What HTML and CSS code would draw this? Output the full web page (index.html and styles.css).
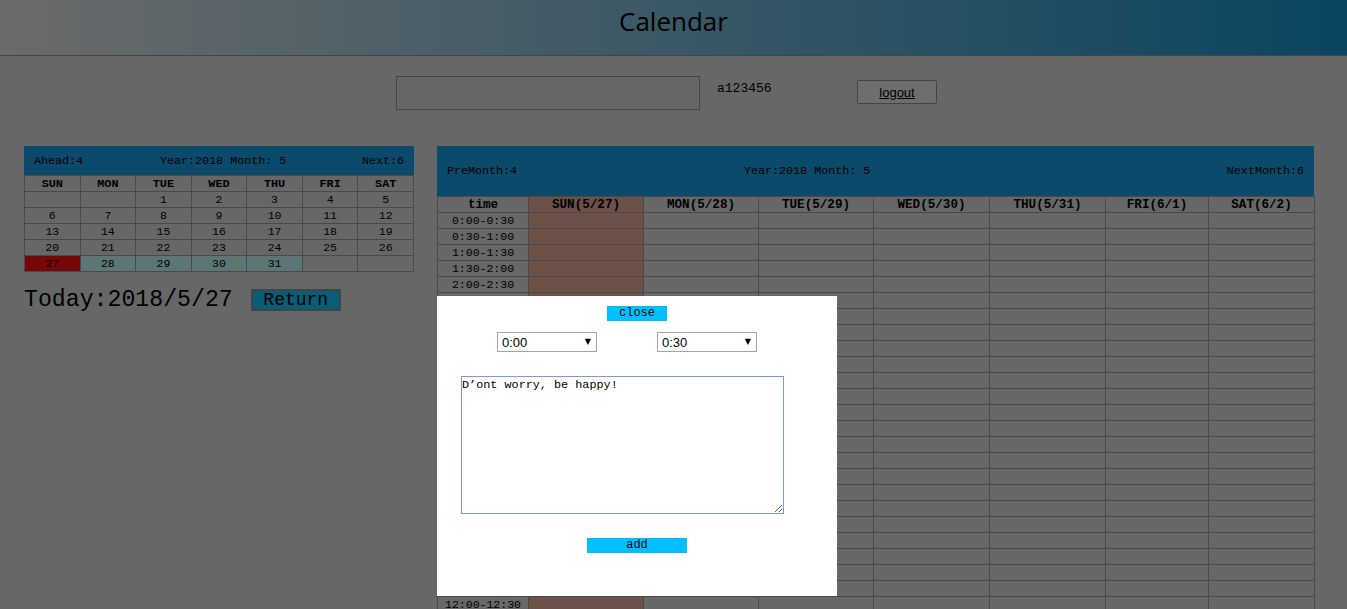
FILE: index.html
```html
<!DOCTYPE html>
<html>
<head>
<meta charset="utf-8">
<title>Calendar</title>
<link rel="stylesheet" href="styles.css">
</head>
<body>
<header class="topbar"><h1 class="title">Calendar</h1></header>

<div class="userbar">
  <input class="search" type="text">
  <span class="username">a123456</span>
  <button class="logout">logout</button>
</div>

<main class="content">
  <section class="mini">
    <div class="mini-head">
      <span>Ahead:4</span><span>Year:2018 Month: 5</span><span>Next:6</span>
    </div>
    <table class="mini-table">
      <thead><tr><th>SUN</th><th>MON</th><th>TUE</th><th>WED</th><th>THU</th><th>FRI</th><th>SAT</th></tr></thead>
      <tbody>
        <tr><td></td><td></td><td>1</td><td>2</td><td>3</td><td>4</td><td>5</td></tr>
        <tr><td>6</td><td>7</td><td>8</td><td>9</td><td>10</td><td>11</td><td>12</td></tr>
        <tr><td>13</td><td>14</td><td>15</td><td>16</td><td>17</td><td>18</td><td>19</td></tr>
        <tr><td>20</td><td>21</td><td>22</td><td>23</td><td>24</td><td>25</td><td>26</td></tr>
        <tr><td class="today">27</td><td class="week">28</td><td class="week">29</td><td class="week">30</td><td class="week">31</td><td></td><td></td></tr>
      </tbody>
    </table>
    <div class="today-line">
      <span class="today-text">Today:2018/5/27</span>
      <button class="return">Return</button>
    </div>
  </section>

  <section class="weekly">
    <div class="week-head">
      <span>PreMonth:4</span><span>Year:2018 Month: 5</span><span>NextMonth:6</span>
    </div>
    <table class="week-table">
      <colgroup>
        <col class="w-time"><col class="w-115"><col class="w-115"><col class="w-115"><col class="w-116"><col class="w-116"><col class="w-103"><col class="w-106">
      </colgroup>
      <thead>
        <tr><th>time</th><th class="sun">SUN(5/27)</th><th>MON(5/28)</th><th>TUE(5/29)</th><th>WED(5/30)</th><th>THU(5/31)</th><th>FRI(6/1)</th><th>SAT(6/2)</th></tr>
      </thead>
      <tbody>
        <tr><td>0:00-0:30</td><td class="sun"></td><td></td><td></td><td></td><td></td><td></td><td></td></tr>
        <tr><td>0:30-1:00</td><td class="sun"></td><td></td><td></td><td></td><td></td><td></td><td></td></tr>
        <tr><td>1:00-1:30</td><td class="sun"></td><td></td><td></td><td></td><td></td><td></td><td></td></tr>
        <tr><td>1:30-2:00</td><td class="sun"></td><td></td><td></td><td></td><td></td><td></td><td></td></tr>
        <tr><td>2:00-2:30</td><td class="sun"></td><td></td><td></td><td></td><td></td><td></td><td></td></tr>
        <tr><td>2:30-3:00</td><td class="sun"></td><td></td><td></td><td></td><td></td><td></td><td></td></tr>
        <tr><td>3:00-3:30</td><td class="sun"></td><td></td><td></td><td></td><td></td><td></td><td></td></tr>
        <tr><td>3:30-4:00</td><td class="sun"></td><td></td><td></td><td></td><td></td><td></td><td></td></tr>
        <tr><td>4:00-4:30</td><td class="sun"></td><td></td><td></td><td></td><td></td><td></td><td></td></tr>
        <tr><td>4:30-5:00</td><td class="sun"></td><td></td><td></td><td></td><td></td><td></td><td></td></tr>
        <tr><td>5:00-5:30</td><td class="sun"></td><td></td><td></td><td></td><td></td><td></td><td></td></tr>
        <tr><td>5:30-6:00</td><td class="sun"></td><td></td><td></td><td></td><td></td><td></td><td></td></tr>
        <tr><td>6:00-6:30</td><td class="sun"></td><td></td><td></td><td></td><td></td><td></td><td></td></tr>
        <tr><td>6:30-7:00</td><td class="sun"></td><td></td><td></td><td></td><td></td><td></td><td></td></tr>
        <tr><td>7:00-7:30</td><td class="sun"></td><td></td><td></td><td></td><td></td><td></td><td></td></tr>
        <tr><td>7:30-8:00</td><td class="sun"></td><td></td><td></td><td></td><td></td><td></td><td></td></tr>
        <tr><td>8:00-8:30</td><td class="sun"></td><td></td><td></td><td></td><td></td><td></td><td></td></tr>
        <tr><td>8:30-9:00</td><td class="sun"></td><td></td><td></td><td></td><td></td><td></td><td></td></tr>
        <tr><td>9:00-9:30</td><td class="sun"></td><td></td><td></td><td></td><td></td><td></td><td></td></tr>
        <tr><td>9:30-10:00</td><td class="sun"></td><td></td><td></td><td></td><td></td><td></td><td></td></tr>
        <tr><td>10:00-10:30</td><td class="sun"></td><td></td><td></td><td></td><td></td><td></td><td></td></tr>
        <tr><td>10:30-11:00</td><td class="sun"></td><td></td><td></td><td></td><td></td><td></td><td></td></tr>
        <tr><td>11:00-11:30</td><td class="sun"></td><td></td><td></td><td></td><td></td><td></td><td></td></tr>
        <tr><td>11:30-12:00</td><td class="sun"></td><td></td><td></td><td></td><td></td><td></td><td></td></tr>
        <tr><td>12:00-12:30</td><td class="sun"></td><td></td><td></td><td></td><td></td><td></td><td></td></tr>
        <tr><td>12:30-13:00</td><td class="sun"></td><td></td><td></td><td></td><td></td><td></td><td></td></tr>
        <tr><td>13:00-13:30</td><td class="sun"></td><td></td><td></td><td></td><td></td><td></td><td></td></tr>
        <tr><td>13:30-14:00</td><td class="sun"></td><td></td><td></td><td></td><td></td><td></td><td></td></tr>
        <tr><td>14:00-14:30</td><td class="sun"></td><td></td><td></td><td></td><td></td><td></td><td></td></tr>
        <tr><td>14:30-15:00</td><td class="sun"></td><td></td><td></td><td></td><td></td><td></td><td></td></tr>
        <tr><td>15:00-15:30</td><td class="sun"></td><td></td><td></td><td></td><td></td><td></td><td></td></tr>
        <tr><td>15:30-16:00</td><td class="sun"></td><td></td><td></td><td></td><td></td><td></td><td></td></tr>
        <tr><td>16:00-16:30</td><td class="sun"></td><td></td><td></td><td></td><td></td><td></td><td></td></tr>
        <tr><td>16:30-17:00</td><td class="sun"></td><td></td><td></td><td></td><td></td><td></td><td></td></tr>
        <tr><td>17:00-17:30</td><td class="sun"></td><td></td><td></td><td></td><td></td><td></td><td></td></tr>
        <tr><td>17:30-18:00</td><td class="sun"></td><td></td><td></td><td></td><td></td><td></td><td></td></tr>
        <tr><td>18:00-18:30</td><td class="sun"></td><td></td><td></td><td></td><td></td><td></td><td></td></tr>
        <tr><td>18:30-19:00</td><td class="sun"></td><td></td><td></td><td></td><td></td><td></td><td></td></tr>
        <tr><td>19:00-19:30</td><td class="sun"></td><td></td><td></td><td></td><td></td><td></td><td></td></tr>
        <tr><td>19:30-20:00</td><td class="sun"></td><td></td><td></td><td></td><td></td><td></td><td></td></tr>
        <tr><td>20:00-20:30</td><td class="sun"></td><td></td><td></td><td></td><td></td><td></td><td></td></tr>
        <tr><td>20:30-21:00</td><td class="sun"></td><td></td><td></td><td></td><td></td><td></td><td></td></tr>
        <tr><td>21:00-21:30</td><td class="sun"></td><td></td><td></td><td></td><td></td><td></td><td></td></tr>
        <tr><td>21:30-22:00</td><td class="sun"></td><td></td><td></td><td></td><td></td><td></td><td></td></tr>
        <tr><td>22:00-22:30</td><td class="sun"></td><td></td><td></td><td></td><td></td><td></td><td></td></tr>
        <tr><td>22:30-23:00</td><td class="sun"></td><td></td><td></td><td></td><td></td><td></td><td></td></tr>
        <tr><td>23:00-23:30</td><td class="sun"></td><td></td><td></td><td></td><td></td><td></td><td></td></tr>
        <tr><td>23:30-24:00</td><td class="sun"></td><td></td><td></td><td></td><td></td><td></td><td></td></tr>
      </tbody>
    </table>
  </section>
</main>

<div class="mask"></div>

<div class="dialog">
  <button class="close-btn">close</button>
  <div class="time-row">
    <div class="select-wrap">
      <select class="time-select"><option>0:00</option><option>0:30</option></select>
    </div>
    <div class="select-wrap">
      <select class="time-select"><option>0:30</option><option>1:00</option></select>
    </div>
  </div>
  <textarea class="note">D’ont worry, be happy!</textarea>
  <button class="add-btn">add</button>
</div>
</body>
</html>
```

FILE: styles.css
```css
* { box-sizing: border-box; }

html, body {
  margin: 0;
  padding: 0;
}

body {
  background: #cecece;
  font-family: "Liberation Mono", "DejaVu Sans Mono", monospace;
  color: #000;
}

.topbar {
  height: 56px;
  border-bottom: 1px solid #8a8a8a;
  background: linear-gradient(to right, #d6d6d6, #148ac2);
  text-align: center;
}

.title {
  margin: 0;
  font-family: "Open Sans", "Noto Sans", sans-serif;
  font-weight: 400;
  font-size: 26px;
  line-height: 42px;
  color: #000;
}

.userbar {
  display: flex;
  justify-content: center;
  align-items: flex-start;
  margin-top: 20px;
  padding-right: 14px;
}

.search {
  width: 304px;
  height: 34px;
  border: 1px solid #8a8a8a;
  background: #cecece;
  margin: 0;
}

.username {
  width: 140px;
  padding-left: 17px;
  box-sizing: content-box;
  font-size: 13px;
  line-height: 15px;
  margin-top: 5px;
}

.logout {
  margin: 4px 0 0 0;
  width: 80px;
  height: 24px;
  background: #dcdcdc;
  border: 1px solid #8a8a8a;
  border-radius: 2px;
  font-family: "Liberation Sans", Arial, sans-serif;
  font-size: 13px;
  text-decoration: underline;
  color: #000;
  padding: 0;
}

.content {
  display: flex;
  align-items: flex-start;
  gap: 23px;
  margin-top: 36px;
  padding-left: 24px;
}

.mini {
  width: 390px;
}

.mini-head {
  height: 29px;
  background: #1694d4;
  display: grid;
  grid-template-columns: 126px 1fr auto;
  align-items: center;
  padding: 0 10px;
  font-size: 11.7px;
}

.mini-table {
  width: 390px;
  border-collapse: collapse;
  table-layout: fixed;
}

.mini-table th,
.mini-table td {
  border: 1px solid #949494;
  height: 16px;
  padding: 0;
  text-align: center;
  line-height: 14px;
  font-size: 11.5px;
}

.mini-table th {
  font-weight: bold;
  font-size: 11.8px;
}

.mini-table .today {
  background: #ee1010;
}

.mini-table .week {
  background: #b8ecea;
}

.today-line {
  display: flex;
  align-items: center;
  margin-top: 16px;
}

.today-text {
  font-size: 23.2px;
  line-height: 24px;
}

.return {
  margin-left: 18px;
  width: 90px;
  height: 22px;
  background: #10bcec;
  border: 2px solid #7c8a90;
  font-family: "Liberation Mono", monospace;
  font-size: 18px;
  line-height: 16px;
  padding: 0;
  color: #000;
}

.weekly {
  width: 877px;
}

.week-head {
  height: 50px;
  background: #1694d4;
  display: grid;
  grid-template-columns: 297px 1fr auto;
  align-items: center;
  padding: 0 10px;
  font-size: 11.7px;
}

.week-table {
  width: 877px;
  border-collapse: collapse;
  table-layout: fixed;
}

.w-time { width: 91px; }
.w-115 { width: 115px; }
.w-116 { width: 116px; }
.w-103 { width: 103px; }
.w-106 { width: 106px; }

.week-table th,
.week-table td {
  border: 1px solid #949494;
  height: 16px;
  padding: 0;
  text-align: center;
  line-height: 14px;
  font-size: 11.5px;
  white-space: nowrap;
}

.week-table th {
  font-weight: bold;
  font-size: 12.6px;
}

.week-table .sun {
  background: #d6a290;
}

.mask {
  position: fixed;
  inset: 0;
  background: rgba(0, 0, 0, 0.5);
}

.dialog {
  position: fixed;
  left: 437px;
  top: 296px;
  width: 400px;
  height: 300px;
  background: #fff;
  display: flex;
  flex-direction: column;
  align-items: center;
}

.close-btn,
.add-btn {
  background: #00bfff;
  border: none;
  padding: 0;
  height: 15px;
  font-family: "Liberation Mono", monospace;
  font-size: 12px;
  line-height: 15px;
  color: #000;
}

.close-btn {
  margin-top: 10px;
  width: 60px;
}

.time-row {
  align-self: flex-start;
  display: flex;
  gap: 60px;
  margin: 11px 0 0 60px;
}

.select-wrap {
  position: relative;
  width: 100px;
  height: 20px;
}

.select-wrap::after {
  content: "\25BC";
  position: absolute;
  right: 6px;
  top: 5px;
  font-family: "DejaVu Sans", sans-serif;
  font-size: 8px;
  line-height: 10px;
  pointer-events: none;
}

.time-select {
  appearance: none;
  -webkit-appearance: none;
  width: 100px;
  height: 20px;
  border: 1px solid #a6a6a6;
  border-radius: 0;
  background: #fff;
  font-family: "Liberation Sans", Arial, sans-serif;
  font-size: 13px;
  padding: 0 0 0 4px;
  color: #000;
}

.note {
  align-self: flex-start;
  margin: 24px 0 0 24px;
  width: 323px;
  height: 138px;
  border: 1px solid #7a9cd6;
  padding: 1px 0;
  font-family: "Liberation Mono", monospace;
  font-size: 11.8px;
  line-height: 14px;
  color: #000;
  outline: none;
}

.add-btn {
  margin-top: 24px;
  width: 100px;
}
```
